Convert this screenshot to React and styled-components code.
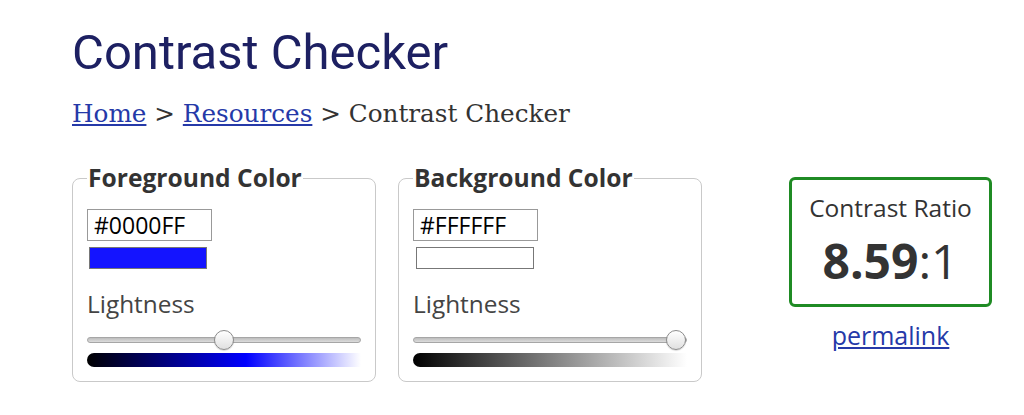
import React from 'react'
import styled, { createGlobalStyle } from 'styled-components'

const GlobalStyle = createGlobalStyle`
  body {
    margin: 0;
    background: #fff;
    font-family: "Open Sans", sans-serif;
    color: #333;
  }
`

const Page = styled.div`
  padding: 25px 0 0 72px;
`

const Title = styled.h1`
  margin: 0;
  font-family: Roboto, sans-serif;
  font-weight: 400;
  font-size: 49px;
  line-height: 56px;
  color: #1d2062;
`

const Crumbs = styled.div`
  margin-top: 18px;
  font-family: "DejaVu Serif", serif;
  font-size: 24.7px;
  line-height: 30px;
  color: #333;
`

const CrumbLink = styled.a`
  color: #2539a8;
  text-decoration: underline;
`

const Row = styled.div`
  display: flex;
  align-items: flex-start;
  margin-top: 36px;
`

const ColorSet = styled.fieldset`
  width: 274px;
  margin: 0 22px 0 0;
  padding: 0 14px 14px 14px;
  border: 1px solid #c9c9c9;
  border-radius: 8px;
  display: flex;
  flex-direction: column;
  align-items: flex-start;
`

const Legend = styled.legend`
  padding: 0 1px;
  margin-left: 0;
  font-weight: 700;
  font-size: 24.6px;
  line-height: 26px;
  color: #333;
`

const HexInput = styled.input`
  margin-top: 18px;
  width: 125px;
  height: 32px;
  box-sizing: border-box;
  border: 1px solid #999;
  padding: 0 6px;
  font-family: "Open Sans", sans-serif;
  font-size: 23px;
  color: #000;
  background: #fff;
`

const Swatch = styled.div`
  margin: 6px 0 0 ${(p) => p.$shift}px;
  width: 118px;
  height: 22px;
  box-sizing: border-box;
  border: 1px solid #777;
  background: ${(p) => p.$color};
`

const Label = styled.div`
  margin-top: 20px;
  font-size: 24.4px;
  line-height: 30px;
  color: #444;
`

const Slider = styled.input`
  -webkit-appearance: none;
  appearance: none;
  margin: 11px 0 0 0;
  width: 274px;
  height: 20px;
  background: transparent;

  &::-webkit-slider-runnable-track {
    height: 6px;
    border-radius: 3px;
    border: 1px solid #a6a6a6;
    box-sizing: border-box;
    background: linear-gradient(#bdbdbd, #dcdcdc);
  }

  &::-webkit-slider-thumb {
    -webkit-appearance: none;
    width: 20px;
    height: 20px;
    margin-top: -8px;
    border-radius: 50%;
    border: 1px solid #8c8c8c;
    box-sizing: border-box;
    background: linear-gradient(#ffffff, #e0e0e0);
    box-shadow: 0 1px 1px rgba(0, 0, 0, 0.15);
  }
`

const Ramp = styled.div`
  margin-top: 3px;
  width: 274px;
  height: 14px;
  border-radius: 7px 0 0 7px;
  background: ${(p) => p.$ramp};
`

const Result = styled.div`
  margin: 12px 0 0 65px;
  display: flex;
  flex-direction: column;
  align-items: center;
`

const RatioBox = styled.div`
  width: 203px;
  box-sizing: border-box;
  border: 3px solid #1f8b24;
  border-radius: 6px;
  padding: 13px 0 15px;
  text-align: center;
`

const RatioLabel = styled.div`
  font-size: 24.5px;
  line-height: 30px;
  color: #333;
`

const RatioValue = styled.div`
  margin-top: 10px;
  font-size: 48px;
  line-height: 56px;
  color: #333;

  b {
    font-weight: 700;
  }
`

const Permalink = styled.a`
  margin-top: 12px;
  font-size: 25px;
  line-height: 32px;
  color: #2539a8;
  text-decoration: underline;
`

const ColorField = ({ title, hex, color, shift, value, ramp }) => (
  <ColorSet>
    <Legend>{title}</Legend>
    <HexInput defaultValue={hex} />
    <Swatch $color={color} $shift={shift} />
    <Label>Lightness</Label>
    <Slider type="range" min="0" max="100" defaultValue={value} />
    <Ramp $ramp={ramp} />
  </ColorSet>
)

export default function App() {
  return (
    <Page>
      <GlobalStyle />
      <Title>Contrast Checker</Title>
      <Crumbs>
        <CrumbLink href="#">Home</CrumbLink> &gt; <CrumbLink href="#">Resources</CrumbLink> &gt; Contrast Checker
      </Crumbs>
      <Row>
        <ColorField
          title="Foreground Color"
          hex="#0000FF"
          color="#1414ff"
          shift={2}
          value={50}
          ramp="linear-gradient(to right, #000 0%, #0000ff 58%, #ffffff 100%)"
        />
        <ColorField
          title="Background Color"
          hex="#FFFFFF"
          color="#ffffff"
          shift={3}
          value={100}
          ramp="linear-gradient(to right, #000 0%, #ffffff 100%)"
        />
        <Result>
          <RatioBox>
            <RatioLabel>Contrast Ratio</RatioLabel>
            <RatioValue><b>8.59</b>:1</RatioValue>
          </RatioBox>
          <Permalink href="#">permalink</Permalink>
        </Result>
      </Row>
    </Page>
  )
}
